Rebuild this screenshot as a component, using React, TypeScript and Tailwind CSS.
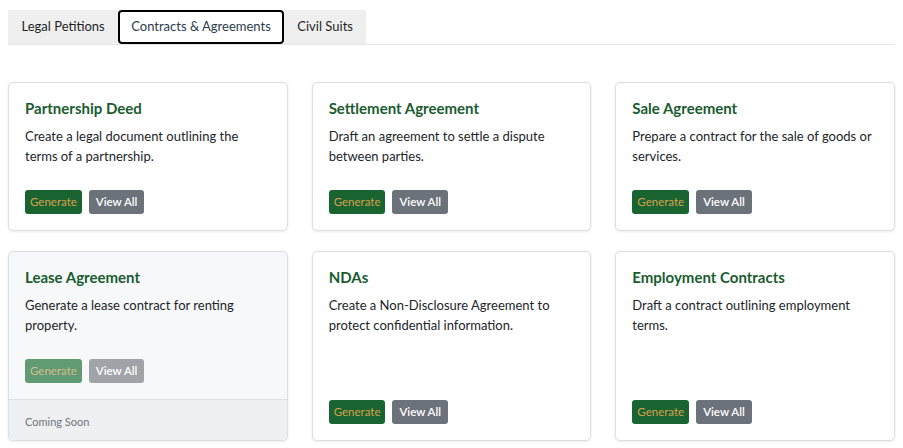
import { useState } from "react";

type Template = {
  title: string;
  description: string;
  comingSoon?: boolean;
};

const tabs = ["Legal Petitions", "Contracts & Agreements", "Civil Suits"];

const templates: Template[] = [
  { title: "Partnership Deed", description: "Create a legal document outlining the terms of a partnership." },
  { title: "Settlement Agreement", description: "Draft an agreement to settle a dispute between parties." },
  { title: "Sale Agreement", description: "Prepare a contract for the sale of goods or services." },
  { title: "Lease Agreement", description: "Generate a lease contract for renting property.", comingSoon: true },
  { title: "NDAs", description: "Create a Non-Disclosure Agreement to protect confidential information." },
  { title: "Employment Contracts", description: "Draft a contract outlining employment terms." },
];

function TemplateCard({ item }: { item: Template }) {
  return (
    <div
      className={`flex flex-col rounded-[5px] border border-[#dcdee1] shadow-[0_1px_3px_rgba(0,0,0,0.08)] overflow-hidden ${
        item.comingSoon ? "bg-[#f7f8f9]" : "bg-white"
      }`}
    >
      <div className="flex flex-1 flex-col px-4 pt-[15px] pb-4">
        <h3 className="text-[15px] font-bold leading-[20px] text-[#1a5c30]">{item.title}</h3>
        <p className="mt-[8px] text-[13px] leading-[20px] text-[#212529]">{item.description}</p>
        <div className="mt-auto flex gap-[7px] pt-[24px]">
          <button
            className={`h-6 rounded-[3px] px-[5px] text-[11.5px] ${
              item.comingSoon ? "bg-[#609b73] text-[#d7bd8c]" : "bg-[#1a6432] text-[#d8a04c]"
            }`}
          >
            Generate
          </button>
          <button
            className={`h-6 rounded-[3px] px-[7px] text-[11.5px] font-semibold text-white ${
              item.comingSoon ? "bg-[#a0a3a8] text-[#f4f4f5]" : "bg-[#6c727a]"
            }`}
          >
            View All
          </button>
        </div>
      </div>
      {item.comingSoon && (
        <div className="border-t border-[#dcdee1] bg-[#eff0f1] px-4 pt-[15px] pb-[11px] text-[11px] leading-[14px] text-[#6c757d]">
          Coming Soon
        </div>
      )}
    </div>
  );
}

export default function App() {
  const [active, setActive] = useState(1);

  return (
    <div className="min-h-screen bg-white p-2 font-['Lato','Noto_Sans',sans-serif] text-[#212529]">
      <div className="mt-[2px] flex border-b border-[#e4e5e7]">
        {tabs.map((tab, i) => (
          <button
            key={tab}
            onClick={() => setActive(i)}
            className={`h-[34px] text-[13px] ${
              i === active
                ? "rounded-[4px] border-2 border-black bg-white px-[11px] text-[#2d3b4d]"
                : "bg-[#efefef] px-[13.5px] text-[#1f1f1f]"
            }`}
          >
            {tab}
          </button>
        ))}
      </div>

      <div className="mt-[37px] grid grid-cols-3 gap-x-6 gap-y-5">
        {templates.map((t) => (
          <TemplateCard key={t.title} item={t} />
        ))}
      </div>
    </div>
  );
}
